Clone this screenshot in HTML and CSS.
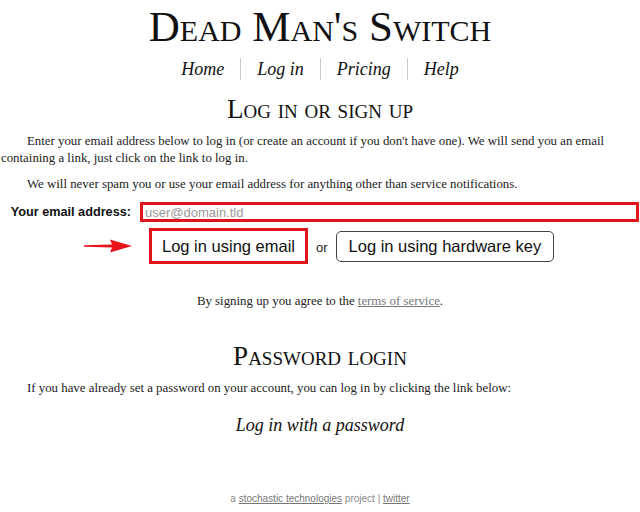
FILE: index.html
```html
<!DOCTYPE html>
<html lang="en">
<head>
    <meta charset="UTF-8">
    <meta name="viewport" content="width=device-width, initial-scale=1.0">
    <title>Dead Man's Switch</title>
    <link rel="stylesheet" href="styles.css">
</head>
<body>
    <h1 class="title">Dead Man's Switch</h1>
    <div class="menu">
        <a href="#">Home</a>
        <a href="#">Log in</a>
        <a href="#">Pricing</a>
        <a href="#">Help</a>
    </div>

    <div class="content">
        <h2>Log in or sign up</h2>
        <p>Enter your email address below to log in (or create an account if you don't have one). We will send you an email containing a link, just click on the link to log in.</p>
        <p>We will never spam you or use your email address for anything other than service notifications.</p>

        <form class="login-form" onsubmit="return false">
            <div class="email-row">
                <label for="email">Your email address:</label>
                <input type="email" id="email" placeholder="user@domain.tld">
            </div>
            <div class="button-row">
                <svg class="arrow" width="48" height="14" viewBox="0 0 48 14">
                    <path d="M0 6.2 L28 5.6 L26 0.5 L48 7 L26 13.5 L28 8.4 L0 7.8 Z" fill="#e8141b"/>
                </svg>
                <button class="btn btn-email">Log in using email</button>
                <span class="or">or</span>
                <button class="btn">Log in using hardware key</button>
            </div>
        </form>

        <p class="terms">By signing up you agree to the <a href="#">terms of service</a>.</p>

        <h2 class="second">Password login</h2>
        <p>If you have already set a password on your account, you can log in by clicking the link below:</p>
        <p class="pw-link"><a href="#">Log in with a password</a></p>
    </div>

    <div class="footer">
        a <a href="#">stochastic technologies</a> project | <a href="#">twitter</a>
    </div>
</body>
</html>
```

FILE: styles.css
```css
body {
    font-family: 'Liberation Serif', serif;
    font-size: 12.85px;
    color: #222;
    background: #fff;
    margin: 0;
    padding: 0 1px;
}
.title {
    font-size: 43px;
    font-weight: normal;
    font-variant: small-caps;
    text-align: center;
    color: #111;
    margin: 5px 0 0;
    line-height: 44px;
}
.menu {
    display: flex;
    justify-content: center;
    margin-top: 9px;
}
.menu a {
    font-style: italic;
    font-size: 18px;
    color: #111;
    text-decoration: none;
    padding: 0 16px;
    line-height: 22px;
    border-left: 1px solid #ccc;
}
.menu a:first-child {
    border-left: none;
}
h2 {
    font-size: 27px;
    font-weight: normal;
    font-variant: small-caps;
    text-align: center;
    color: #111;
    margin: 13px 0 8px;
    line-height: 32px;
}
p {
    text-indent: 26px;
    line-height: 17px;
    margin: 0 0 9px;
}
.email-row {
    display: flex;
    align-items: center;
    margin-top: 7px;
}
.email-row label {
    font-family: 'Liberation Sans', sans-serif;
    font-weight: bold;
    font-size: 12.7px;
    color: #111;
    width: 130px;
    text-align: right;
    margin-right: 9px;
}
.email-row input {
    flex: 1;
    height: 20px;
    box-sizing: border-box;
    border: 3px solid #e0141b;
    padding: 0 2px;
    font-family: 'Liberation Sans', sans-serif;
    font-size: 13px;
    margin: 0;
}
.email-row input::placeholder {
    color: #999;
}
.button-row {
    display: flex;
    align-items: center;
    margin-top: 6px;
    padding-left: 83px;
}
.arrow {
    margin-right: 17px;
}
.btn {
    font-family: 'Liberation Sans', sans-serif;
    font-size: 16.5px;
    color: #111;
    background: #fff;
    border: 1px solid #444;
    border-radius: 5px;
    padding: 0 12px;
    height: 31px;
    white-space: nowrap;
}
.btn-email {
    border: 3px solid #e0141b;
    border-radius: 0;
    height: 36px;
    padding: 0 10px;
}
.or {
    font-family: 'Liberation Sans', sans-serif;
    font-size: 13px;
    margin: 0 8px;
    padding-top: 3px;
}
.terms {
    text-align: center;
    text-indent: 0;
    margin-top: 29px;
}
.terms a {
    color: #777;
}
h2.second {
    margin-top: 30px;
    margin-bottom: 8px;
}
.pw-link {
    text-align: center;
    text-indent: 0;
    margin-top: 20px;
}
.pw-link a {
    font-style: italic;
    font-size: 18px;
    color: #111;
    text-decoration: none;
}
.footer {
    font-family: 'Liberation Sans', sans-serif;
    font-size: 10px;
    color: #888;
    text-align: center;
    margin-top: 57px;
}
.footer a {
    color: #777;
}
```
